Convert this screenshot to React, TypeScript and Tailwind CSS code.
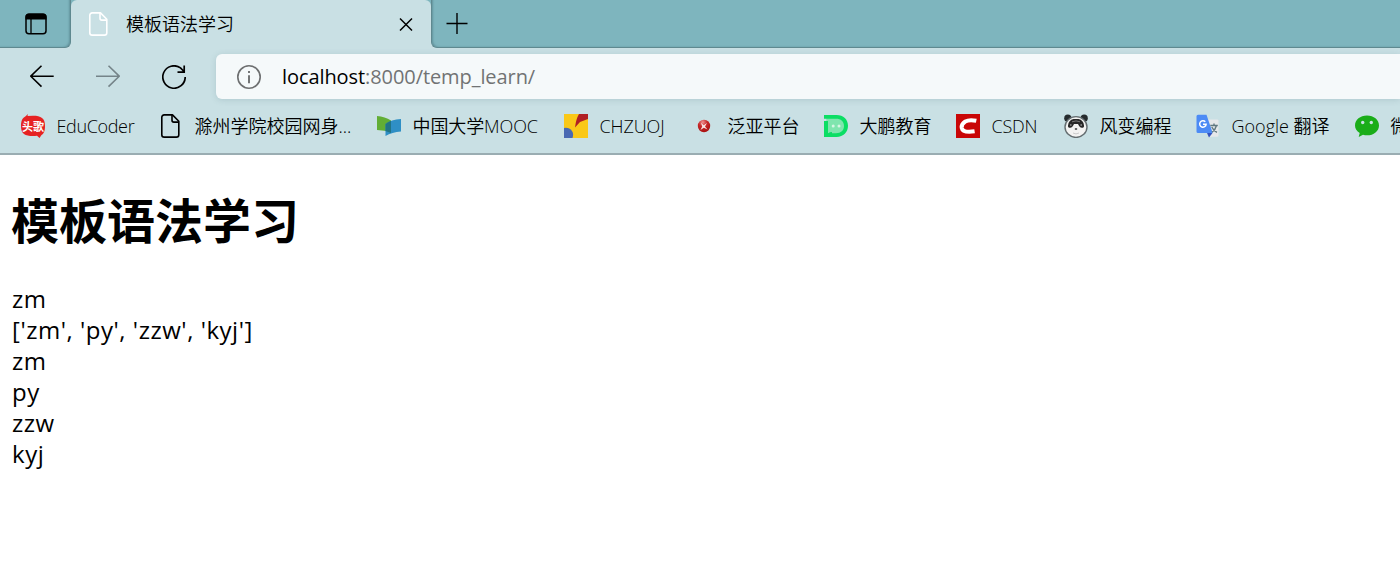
import React from "react";

const ui = "font-['Open_Sans','Noto_Sans_CJK_SC',sans-serif]";

function PageIcon({ className }: { className: string }) {
  return (
    <svg className={className} viewBox="0 0 24 24" fill="none" stroke="currentColor" strokeWidth="1.6" strokeLinejoin="round">
      <path d="M5.2.9h8.3l6.3 6.4v13.4a2.4 2.4 0 0 1-2.4 2.4H5.2a2.4 2.4 0 0 1-2.4-2.4V3.3A2.4 2.4 0 0 1 5.2.9Z" />
      <path d="M13 1v5.3a1.8 1.8 0 0 0 1.8 1.8h5" />
    </svg>
  );
}

function EduIcon() {
  return (
    <div className="relative flex h-6 w-6 items-center justify-center">
      <svg className="absolute inset-0 h-6 w-6" viewBox="0 0 24 24">
        <path d="M7 0 6.500 2.100Q9 1.800 12 1.800c8 0 12 2.500 12 10.200 0 5-1 7.500-3.500 9L18.500 24l-2.500-2.300q-2 .3-4 .3C4 22 0 20 0 12 0 6.500 1.500 3.800 4 2.700Z" fill="#e62222" />
      </svg>
      <span className="relative whitespace-nowrap font-['Noto_Sans_CJK_SC',sans-serif] text-[11px] font-bold leading-none text-white">头歌</span>
    </div>
  );
}

function MoocIcon() {
  return (
    <svg className="h-6 w-6" viewBox="0 0 24 24">
      <path d="M0 2q8 .5 14 4.500v12Q8 16 0 16Z" fill="#62ae35" />
      <path d="M8.500 10Q14 5.500 24 5v12.500q-9 .5-15.500 4.500Z" fill="#2f8fc5" />
      <path d="M8.500 10q2.500-2 5.500-3.200v12.300L8.500 17Z" fill="#217485" />
    </svg>
  );
}

function ChzuojIcon() {
  return (
    <svg className="h-6 w-6" viewBox="0 0 24 24">
      <path d="M0 0h24v24H0Z" fill="#fac817" />
      <path d="M15 0h9v5l-8 3-5 5.500Q12 5 15 0Z" fill="#b01f24" />
      <path d="M0 14q5-1 8 3 2 3 .5 7H0Z" fill="#4969b2" />
    </svg>
  );
}

function FanyaIcon() {
  return (
    <svg className="h-6 w-6" viewBox="0 0 24 24">
      <defs>
        <radialGradient id="ball" cx=".4" cy=".2" r=".85">
          <stop offset="0" stopColor="#ed9292" />
          <stop offset=".4" stopColor="#c82a2a" />
          <stop offset="1" stopColor="#a50f0f" />
        </radialGradient>
      </defs>
      <circle cx="12" cy="12" r="6.200" fill="url(#ball)" />
      <path d="m9 8.700 2.700 2.500L15 9l-2 3.500 2.500 3-3.700-1.800L8.500 16l1.700-3.500Z" fill="#f8e4e4" />
    </svg>
  );
}

function DapengIcon() {
  return (
    <svg className="h-6 w-6" viewBox="0 0 24 24">
      <path d="M2.300 3.300H13a8.600 8.600 0 0 1 0 17.200H2.300Z" fill="#7fe5ae" />
      <path d="M0 1h12.500C19.500 1 24 5.500 24 11.800S19.500 23 12.500 23H0V7h4v12.200h8c5 0 8-2.800 8-7.200 0-4.600-3-7.300-8-7.300H0Z" fill="#0bde64" />
      <path d="M3 23q0-5 5-5v3Z" fill="#0bde64" />
      <circle cx="9.200" cy="12" r="1.500" fill="#d6f5e3" />
      <circle cx="15" cy="12" r="1.500" fill="#d6f5e3" />
    </svg>
  );
}

function CsdnIcon() {
  return (
    <svg className="h-6 w-6" viewBox="0 0 24 24">
      <path d="M0 0h24v24H0Z" fill="#c90606" />
      <path d="M20.300 6.800q-7-1.500-11 .7-4.100 2.500-3.600 6.300 1 5.300 12.900 3.500" fill="none" stroke="#fff" strokeWidth="4" />
    </svg>
  );
}

function PandaIcon() {
  return (
    <svg className="h-6 w-6" viewBox="0 0 24 24">
      <circle cx="3.800" cy="4.200" r="3.600" fill="#252b2d" />
      <circle cx="20.200" cy="4.200" r="3.600" fill="#252b2d" />
      <ellipse cx="12" cy="13" rx="11" ry="10.400" fill="#f3f3f2" stroke="#646d70" strokeWidth="1.400" />
      <path d="M4 11.500Q4.500 6 9.500 5h5Q19.500 6 20 11.500q.4 2.300-2.200 2.300-2.300-.2-3.800-3.800h-4q-1.500 3.600-3.800 3.800-2.600 0-2.200-2.300Z" fill="#272727" />
      <path d="M8 7.800q4-1.800 8 0" stroke="#777" fill="none" />
      <circle cx="6.800" cy="11" r=".9" fill="#888" />
      <circle cx="17.200" cy="11" r=".9" fill="#888" />
      <ellipse cx="12" cy="15" rx="1.300" ry=".9" fill="#555" />
      <path d="M9 19q3 1.800 6 0" stroke="#ccc" fill="none" />
    </svg>
  );
}

function TranslateIcon() {
  return (
    <svg className="h-6 w-6" viewBox="0 0 24 24">
      <path d="M9 5.500h12.200a1.300 1.300 0 0 1 1.300 1.300v14.700a1.300 1.300 0 0 1-1.300 1.300H13Z" fill="#e6e8ea" />
      <path d="M11 19h5.500L13 23.500Z" fill="#3453bd" />
      <path d="M2 .7h8.500l6.200 18.300H2A1.500 1.500 0 0 1 .5 17.500V2.200A1.500 1.500 0 0 1 2 .7Z" fill="#4c8bf5" />
      <path d="M9.300 7.800a3.200 3.200 0 1 0 .8 2.500H7" fill="none" stroke="#fff" strokeWidth="1.500" />
      <path d="M14.300 11.500h7.500M18 9.500v2M20.500 11.500q-1 4-4.500 6.800M15.800 13q1.500 3.500 5.200 5.300" fill="none" stroke="#607880" strokeWidth="1.400" />
    </svg>
  );
}

function WechatIcon() {
  return (
    <svg className="h-6 w-6" viewBox="0 0 24 24">
      <path d="M12 1.500c6.800 0 12 4.300 12 9.900s-5.200 9.900-12 9.900q-2 0-4-.6l-4.300 2.200 1-3.900C1.800 17 0 14.400 0 11.400 0 5.800 5.200 1.500 12 1.500Z" fill="#1aad19" />
      <circle cx="7.700" cy="8.500" r="1.700" fill="#c9e0e4" />
      <circle cx="16.300" cy="8.500" r="1.700" fill="#c9e0e4" />
    </svg>
  );
}

const bookmarks = [
  { icon: <EduIcon />, label: "EduCoder", slot: "w-[138px]", tracking: "tracking-[-0.35px]" },
  { icon: <PageIcon className="h-6 w-6" />, label: "滁州学院校园网身...", slot: "w-[218px]", tracking: "tracking-[0px]" },
  { icon: <MoocIcon />, label: "中国大学MOOC", slot: "w-[187px]", tracking: "tracking-[-0.1px]" },
  { icon: <ChzuojIcon />, label: "CHZUOJ", slot: "w-[128px]", tracking: "tracking-[-0.1px]" },
  { icon: <FanyaIcon />, label: "泛亚平台", slot: "w-[132px]", tracking: "tracking-[0px]" },
  { icon: <DapengIcon />, label: "大鹏教育", slot: "w-[132px]", tracking: "tracking-[0px]" },
  { icon: <CsdnIcon />, label: "CSDN", slot: "w-[108px]", tracking: "tracking-[-0.2px]" },
  { icon: <PandaIcon />, label: "风变编程", slot: "w-[132px]", tracking: "tracking-[0px]" },
  { icon: <TranslateIcon />, label: "Google 翻译", slot: "w-[159px]", tracking: "tracking-[0px]" },
  { icon: <WechatIcon />, label: "微信", slot: "w-[90px]", tracking: "tracking-[0px]" },
];

function TabStrip() {
  return (
    <div className="flex h-12 bg-[#c9e0e4]">
      <div className="flex w-[71px] shrink-0 items-center rounded-br-[6px] border-b border-r border-[#5f8990] bg-[#7eb5be] pl-[25px] shadow-[inset_-2px_-1px_2px_-1px_rgba(50,90,98,0.35)]">
        <svg className="h-[22px] w-[22px]" viewBox="0 0 22 22" fill="none" stroke="#000" strokeWidth="1.500">
          <rect x="1" y="1.300" width="20" height="19.500" rx="3" />
          <path d="M.5 4A3.500 3.500 0 0 1 4 .5h14A3.500 3.500 0 0 1 21.500 4v2.500H.5Z" fill="#000" stroke="none" />
          <path d="M6 6v14.500" strokeWidth="1.300" />
        </svg>
      </div>
      <div className="w-[360px] shrink-0 bg-linear-to-b from-[#7eb5be] from-[8px] to-[#c9e0e4] to-[8px]">
        <div className="flex h-12 items-center rounded-t-[6px] bg-[#c9e0e4] pl-4 pr-[18px]">
          <PageIcon className="h-6 w-6 text-white" />
          <span className="-mt-px ml-[15px] text-[18px] font-[350] leading-6">模板语法学习</span>
          <svg className="ml-auto h-[14px] w-[14px]" viewBox="0 0 14 14" stroke="#000" strokeWidth="1.500">
            <path d="m1 2 12 12M13 2 1 14" transform="translate(0 -.5)" />
          </svg>
        </div>
      </div>
      <div className="flex grow items-center rounded-bl-[6px] border-b border-l border-[#5f8990] bg-[#7eb5be] pl-[14px] shadow-[inset_2px_-1px_2px_-1px_rgba(50,90,98,0.35)]">
        <svg className="h-[22px] w-[22px]" viewBox="0 0 22 22" stroke="#000" strokeWidth="1.400">
          <path d="M.5 10.500h21M11 0v21" />
        </svg>
      </div>
    </div>
  );
}

function Toolbar() {
  return (
    <div className="flex h-[57px] items-start pt-1.5">
      <div className="flex h-[45px] w-[216px] shrink-0 items-center pl-[30px]">
        <svg className="h-6 w-6" viewBox="0 0 24 24" fill="none" stroke="#000" strokeWidth="1.600">
          <path d="M11.500.8.8 11.200l10.700 10.400M.8 11.200H23.700" />
        </svg>
        <svg className="ml-[42px] h-6 w-6" viewBox="0 0 24 24" fill="none" stroke="#758489" strokeWidth="1.600">
          <path d="m12.500.8 10.700 10.400-10.700 10.400M23.200 11.200H0" />
        </svg>
        <svg className="ml-[42px] h-6 w-6" viewBox="0 0 24 24" fill="none" stroke="#000" strokeWidth="1.700">
          <path d="M23.200 12A11.200 11.200 0 1 1 18.500 2.900L22 6.500M22.200.5v6.700h-6.700" />
        </svg>
      </div>
      <div className="flex h-[45px] grow items-center rounded-l-[6px] bg-[#f5f9fa] pl-[21px] shadow-[0_1px_6px_rgba(70,110,120,0.2)]">
        <svg className="h-6 w-6" viewBox="0 0 24 24" fill="none" stroke="#6d6f70" strokeWidth="1.600">
          <circle cx="12" cy="12" r="11.200" />
          <path d="M12 10.200v8M12 6v2" strokeWidth="1.900" />
        </svg>
        <span className="ml-[21px] text-[20px] leading-7 tracking-[-0.08px] text-[#717374]">
          <span className="text-black">localhost</span>:8000/temp_learn/
        </span>
      </div>
    </div>
  );
}

export default function App() {
  return (
    <div className={`h-[574px] w-[1400px] overflow-hidden bg-white text-black ${ui}`}>
      <header className="flex h-[155px] flex-col border-b-2 border-[#9aadb2] bg-[#c9e0e4]">
        <TabStrip />
        <Toolbar />
        <nav className="flex h-[42px] items-center overflow-hidden pl-[21px]">
          {bookmarks.map((b) => (
            <div key={b.label} className={`flex shrink-0 items-center gap-[11.5px] ${b.slot}`}>
              {b.icon}
              <span className={`-mt-px whitespace-nowrap text-[18px] font-[350] leading-6 ${b.tracking}`}>{b.label}</span>
            </div>
          ))}
        </nav>
      </header>
      <main className="pl-3 pt-[34px]">
        <h1 className="-ml-px text-[48px] font-bold leading-[64px]">模板语法学习</h1>
        <div className="mt-[30px] text-[24px] leading-[31px] tracking-[0.53px]">
          <p>zm</p>
          <p>['zm', 'py', 'zzw', 'kyj']</p>
          <p>zm</p>
          <p>py</p>
          <p>zzw</p>
          <p>kyj</p>
        </div>
      </main>
    </div>
  );
}
